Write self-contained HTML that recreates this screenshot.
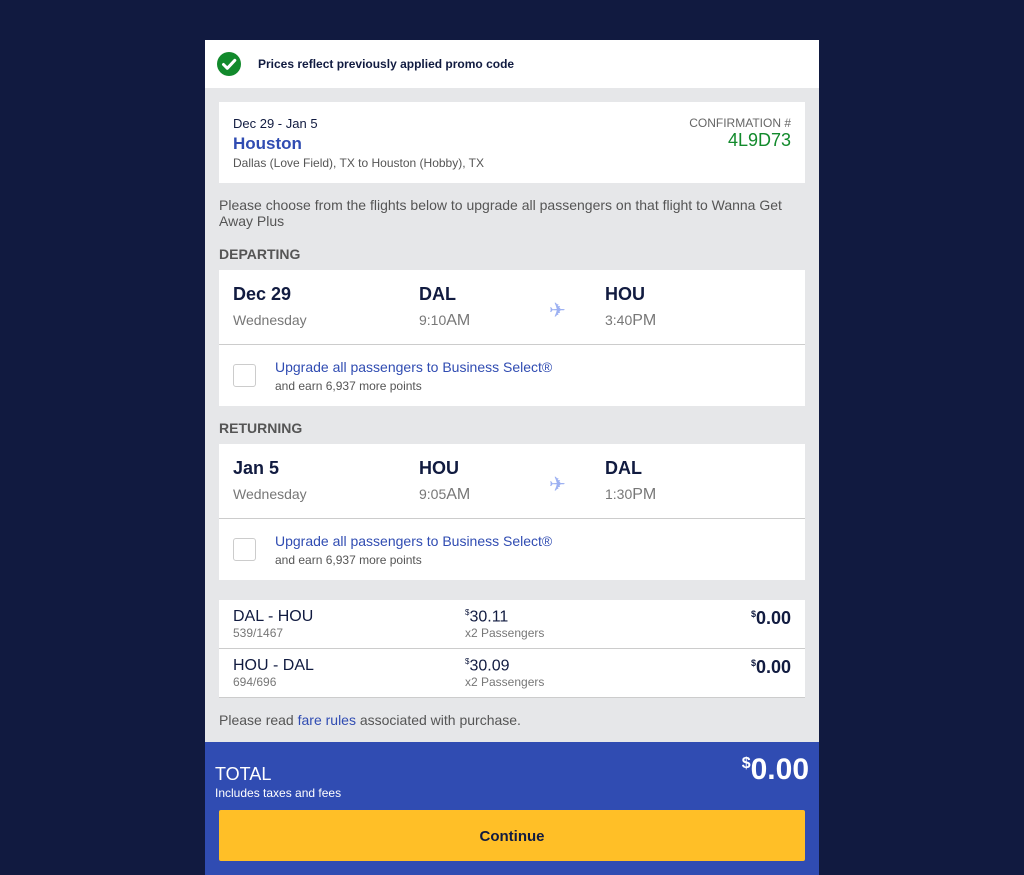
<!DOCTYPE html>
<html><head><meta charset="utf-8"><style>
*{margin:0;padding:0;box-sizing:border-box}
body{width:1024px;height:875px;background:#111a40;font-family:"Liberation Sans",sans-serif;position:relative;overflow:hidden}
.a{position:absolute;white-space:nowrap}
#main{position:absolute;left:205px;top:40px;width:614px;height:835px;background:#e6e7e9}
.w{position:absolute;background:#fff;left:14px;width:586px}
.navy{color:#111b40}
.g{color:#777}
.blue{color:#304cb2}
.b{font-weight:bold}
.chk{position:absolute;width:23px;height:23px;border:1px solid #ccc;border-radius:3px;background:#fff}
.pl{color:#9db1f2;font-size:20px;font-family:"DejaVu Sans",sans-serif}
</style></head><body>
<div id="main">
<div class="a" style="left:0;top:0;width:614px;height:48px;background:#fff"></div>
<svg class="a" style="left:12px;top:12px" width="24" height="24" viewBox="0 0 24 24"><circle cx="12" cy="12" r="12" fill="#128a2c"/><path d="M6.5 12.5l3.8 3.8 7.5-8" stroke="#fff" stroke-width="3" fill="none" stroke-linecap="round" stroke-linejoin="round"/></svg>
<div class="a navy b" style="left:53px;top:17px;font-size:12px">Prices reflect previously applied promo code</div>

<div class="w" style="top:62px;height:81px"></div>
<div class="a navy" style="left:28px;top:76px;font-size:13px">Dec 29 - Jan 5</div>
<div class="a blue b" style="left:28px;top:94px;font-size:17px">Houston</div>
<div class="a" style="left:28px;top:116px;font-size:12px;color:#555">Dallas (Love Field), TX to Houston (Hobby), TX</div>
<div class="a" style="right:28px;top:76px;font-size:12px;color:#666">CONFIRMATION #</div>
<div class="a" style="right:28px;top:90px;font-size:18px;color:#128a2c">4L9D73</div>

<div class="a" style="left:14px;top:157px;font-size:14px;color:#555;line-height:16px;white-space:normal;width:586px">Please choose from the flights below to upgrade all passengers on that flight to Wanna Get Away Plus</div>
<div class="a b" style="left:14px;top:206px;font-size:14px;color:#555">DEPARTING</div>

<div class="w" style="top:230px;height:136px"></div>
<div class="a" style="left:14px;top:304px;width:586px;height:1px;background:#ccc"></div>
<div class="a navy b" style="left:28px;top:244px;font-size:18px">Dec 29</div>
<div class="a g" style="left:28px;top:272px;font-size:14px">Wednesday</div>
<div class="a navy b" style="left:214px;top:244px;font-size:18px">DAL</div>
<div class="a g" style="left:214px;top:272px;font-size:14px">9:10<span style="font-size:16px">AM</span></div>
<div class="a pl" style="left:344px;top:258px">✈</div>
<div class="a navy b" style="left:400px;top:244px;font-size:18px">HOU</div>
<div class="a g" style="left:400px;top:272px;font-size:14px">3:40<span style="font-size:16px">PM</span></div>
<div class="chk" style="left:28px;top:324px"></div>
<div class="a blue" style="left:70px;top:319px;font-size:14px">Upgrade all passengers to Business Select®</div>
<div class="a" style="left:70px;top:339px;font-size:12px;color:#555">and earn 6,937 more points</div>

<div class="a b" style="left:14px;top:380px;font-size:14px;color:#555">RETURNING</div>
<div class="w" style="top:404px;height:136px"></div>
<div class="a" style="left:14px;top:478px;width:586px;height:1px;background:#ccc"></div>
<div class="a navy b" style="left:28px;top:418px;font-size:18px">Jan 5</div>
<div class="a g" style="left:28px;top:446px;font-size:14px">Wednesday</div>
<div class="a navy b" style="left:214px;top:418px;font-size:18px">HOU</div>
<div class="a g" style="left:214px;top:446px;font-size:14px">9:05<span style="font-size:16px">AM</span></div>
<div class="a pl" style="left:344px;top:432px">✈</div>
<div class="a navy b" style="left:400px;top:418px;font-size:18px">DAL</div>
<div class="a g" style="left:400px;top:446px;font-size:14px">1:30<span style="font-size:16px">PM</span></div>
<div class="chk" style="left:28px;top:498px"></div>
<div class="a blue" style="left:70px;top:493px;font-size:14px">Upgrade all passengers to Business Select®</div>
<div class="a" style="left:70px;top:513px;font-size:12px;color:#555">and earn 6,937 more points</div>

<div class="w" style="top:560px;height:98px"></div>
<div class="a" style="left:14px;top:608px;width:586px;height:1px;background:#ccc"></div>
<div class="a" style="left:14px;top:657px;width:586px;height:1px;background:#ccc"></div>
<div class="a navy" style="left:28px;top:568px;font-size:16px">DAL - HOU</div>
<div class="a g" style="left:28px;top:586px;font-size:12px">539/1467</div>
<div class="a navy" style="left:260px;top:568px;font-size:16px"><sup style="font-size:8px">$</sup>30.11</div>
<div class="a g" style="left:260px;top:586px;font-size:12px">x2 Passengers</div>
<div class="a navy b" style="right:28px;top:568px;font-size:18px"><sup style="font-size:9px">$</sup>0.00</div>
<div class="a navy" style="left:28px;top:617px;font-size:16px">HOU - DAL</div>
<div class="a g" style="left:28px;top:635px;font-size:12px">694/696</div>
<div class="a navy" style="left:260px;top:617px;font-size:16px"><sup style="font-size:8px">$</sup>30.09</div>
<div class="a g" style="left:260px;top:635px;font-size:12px">x2 Passengers</div>
<div class="a navy b" style="right:28px;top:617px;font-size:18px"><sup style="font-size:9px">$</sup>0.00</div>

<div class="a" style="left:14px;top:672px;font-size:14px;color:#555">Please read <span class="blue">fare rules</span> associated with purchase.</div>

<div class="a" style="left:0;top:702px;width:614px;height:133px;background:#304cb2"></div>
<div class="a" style="left:10px;top:724px;font-size:18px;color:#fff">TOTAL</div>
<div class="a" style="left:10px;top:746px;font-size:12px;color:#fff">Includes taxes and fees</div>
<div class="a b" style="right:10px;top:713px;font-size:30px;color:#fff"><sup style="font-size:16px">$</sup>0.00</div>
<div class="a" style="left:14px;top:770px;width:586px;height:51px;background:#ffbf27;border-radius:2px;text-align:center;line-height:53px;font-size:15px;font-weight:bold;color:#111b40">Continue</div>
</div>
</body></html>
